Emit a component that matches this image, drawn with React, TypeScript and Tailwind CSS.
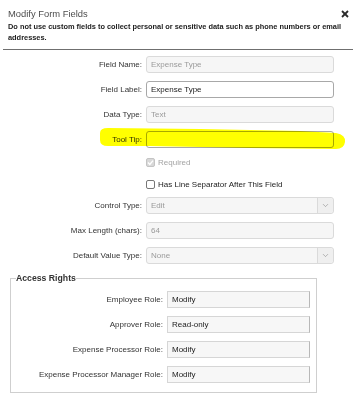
import { ChevronDown } from "lucide-react";

const FONT = "font-['Liberation_Sans',Arial,sans-serif]";

function Label({ text, w }: { text: string; w: string }) {
  return <span className={`${w} shrink-0 text-right text-[8px] text-[#333] pr-[4px]`}>{text}</span>;
}

function Field({ label, value, kind = "disabled" }: { label: string; value?: string; kind?: "disabled" | "edit" }) {
  const box =
    kind === "edit"
      ? "bg-white border-[#a8a8a8] text-[#222]"
      : "bg-[#f6f6f6] border-[#dadada] text-[#9a9a9a]";
  return (
    <div className="flex items-center h-[17px]">
      <Label text={label} w="w-[146px]" />
      <div className={`w-[188px] h-[17px] rounded-[3px] border flex items-center pl-[4px] text-[8px] ${box}`}>
        {value}
      </div>
    </div>
  );
}

function SelectField({ label, value }: { label: string; value: string }) {
  return (
    <div className="flex items-center h-[17px]">
      <Label text={label} w="w-[146px]" />
      <div className="w-[188px] h-[17px] rounded-[3px] border border-[#dadada] bg-[#f6f6f6] flex items-center text-[8px] text-[#9a9a9a]">
        <span className="flex-1 pl-[4px]">{value}</span>
        <span className="w-[16px] h-full border-l border-[#dadada] bg-[#efefef] rounded-r-[3px] flex items-center justify-center text-[#8a8a8a]">
          <ChevronDown size={9} strokeWidth={1.6} />
        </span>
      </div>
    </div>
  );
}

function RoleField({ label, value }: { label: string; value: string }) {
  return (
    <div className="flex items-center h-[17px]">
      <Label text={label} w="w-[156px]" />
      <div className="w-[143px] h-[17px] border border-[#d6d6d6] border-r-[#b8b8b8] bg-[#f7f7f7] flex items-center pl-[4px] text-[8px] text-[#222]">
        {value}
      </div>
    </div>
  );
}

export default function App() {
  return (
    <div className={`relative w-[356px] h-[400px] bg-white overflow-hidden ${FONT}`}>
      {/* Header */}
      <div className="relative px-[8px] pt-[8px]">
        <div className="text-[9.4px] leading-[12px] text-[#4d4d4d]">Modify Form Fields</div>
        <svg className="absolute right-[7px] top-[10px]" width="8" height="8" viewBox="0 0 8 8">
          <line x1="1" y1="1" x2="7" y2="7" stroke="#2a2a2a" strokeWidth="1.8" />
          <line x1="7" y1="1" x2="1" y2="7" stroke="#2a2a2a" strokeWidth="1.8" />
        </svg>
        <p className="mt-[1px] text-[7.4px] leading-[11px] font-bold text-[#222]">
          Do not use custom fields to collect personal or sensitive data such as phone numbers or email addresses.
        </p>
      </div>
      <div className="mx-[3px] mt-[6px] border-t border-[#6f6f6f]" />

      {/* Form */}
      <div className="flex flex-col">
        <div className="mt-[6px]">
          <Field label="Field Name:" value="Expense Type" />
        </div>
        <div className="mt-[8px]">
          <Field label="Field Label:" value="Expense Type" kind="edit" />
        </div>
        <div className="mt-[8px]">
          <Field label="Data Type:" value="Text" />
        </div>
        <div className="mt-[8px]">
          <div className="flex items-center h-[17px]">
            <Label text="Tool Tip:" w="w-[146px]" />
            <div className="w-[188px] h-[17px] rounded-[3px] border border-[#a8a8a8] bg-white" />
          </div>
        </div>
        <div className="mt-[6px] flex items-center h-[17px] pl-[146px] gap-[3px]">
          <span className="w-[9px] h-[9px] rounded-[2px] bg-[#d8d8d8] border border-[#c4c4c4] flex items-center justify-center">
            <svg width="7" height="7" viewBox="0 0 7 7">
              <polyline points="1,3.6 2.8,5.4 6,1.6" fill="none" stroke="#fff" strokeWidth="1.4" />
            </svg>
          </span>
          <span className="text-[8px] text-[#a3a3a3]">Required</span>
        </div>
        <div className="mt-[5px] flex items-center h-[17px] pl-[146px] gap-[3px]">
          <span className="w-[9px] h-[9px] rounded-[2px] bg-white border border-[#777]" />
          <span className="text-[8px] text-[#222]">Has Line Separator After This Field</span>
        </div>
        <div className="mt-[4px]">
          <SelectField label="Control Type:" value="Edit" />
        </div>
        <div className="mt-[8px]">
          <Field label="Max Length (chars):" value="64" />
        </div>
        <div className="mt-[8px]">
          <SelectField label="Default Value Type:" value="None" />
        </div>

        {/* Access Rights */}
        <fieldset className="mt-[9px] ml-[10px] w-[307px] border border-[#cfcfcf] pt-[7px] pb-[9px] flex flex-col gap-[8px]">
          <legend className="ml-[5px] text-[8.7px] leading-[11px] font-bold text-[#333]">Access Rights</legend>
          <RoleField label="Employee Role:" value="Modify" />
          <RoleField label="Approver Role:" value="Read-only" />
          <RoleField label="Expense Processor Role:" value="Modify" />
          <RoleField label="Expense Processor Manager Role:" value="Modify" />
        </fieldset>
      </div>

      {/* Highlighter mark over the Tool Tip row */}
      <svg className="absolute left-0 top-0 pointer-events-none mix-blend-multiply" width="356" height="400">
        <path
          d="M100,133 Q100,128 108,128 L200,129 L300,131 L336,133 Q346,135 345,142 Q344,149 336,149 L250,148 L150,146 L108,146 Q100,146 100,140 Z"
          fill="#ffff00"
        />
      </svg>
    </div>
  );
}
